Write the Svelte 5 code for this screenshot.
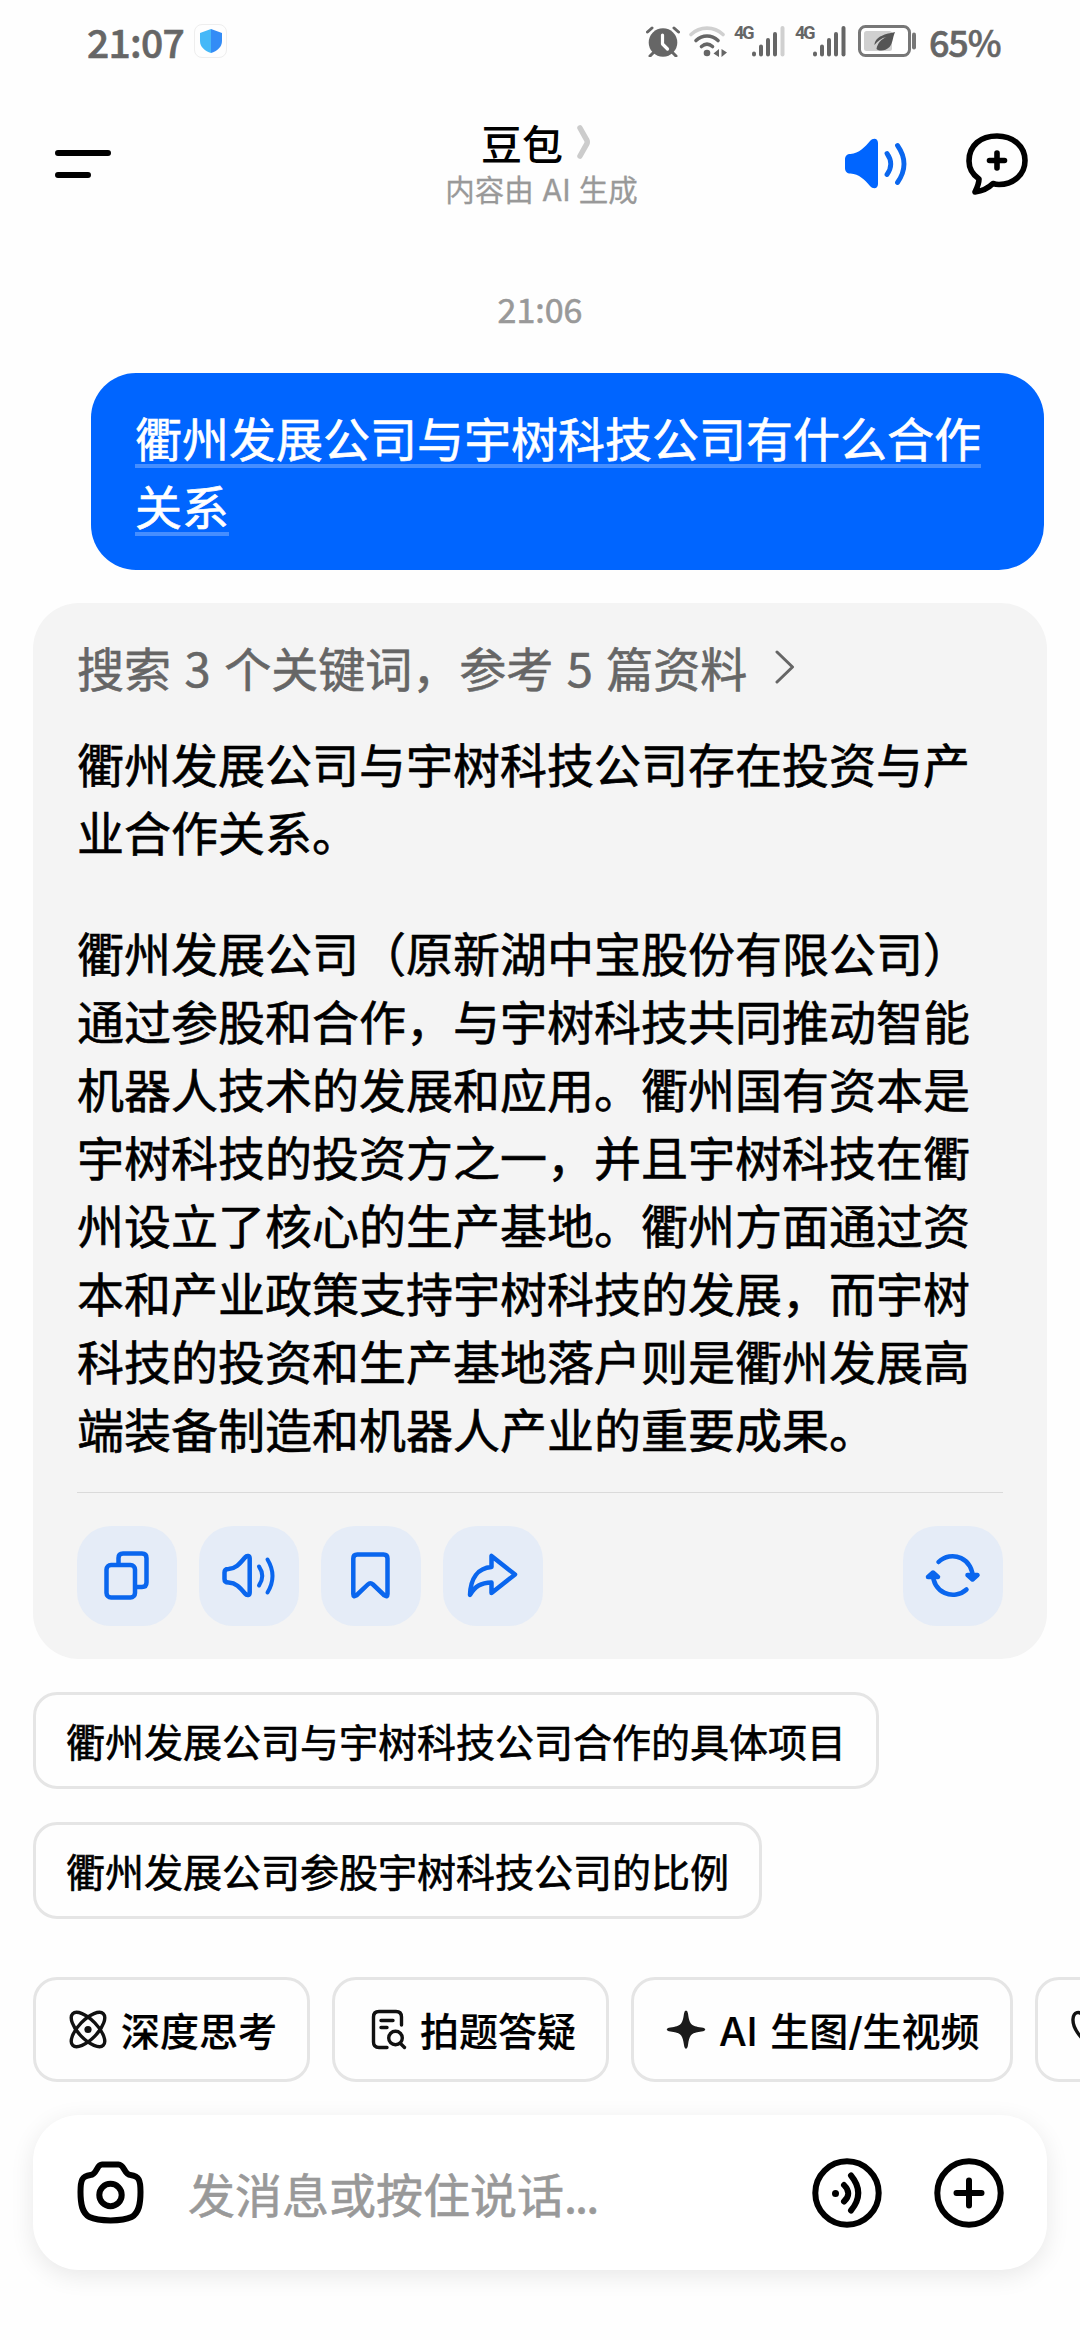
<script>
  const suggestions = [
    '衢州发展公司与宇树科技公司合作的具体项目',
    '衢州发展公司参股宇树科技公司的比例',
  ];
  const tools = [
    { icon: 'atom', label: '深度思考' },
    { icon: 'scan', label: '拍题答疑' },
    { icon: 'spark', label: 'AI 生图/生视频' },
    { icon: 'phone', label: '' },
  ];
</script>

{#snippet signal(weak)}
  <div class="signal">
    <span class="net">4G</span>
    <svg width="33" height="31" viewBox="0 0 33 31" stroke-width="4" stroke-linecap="round" stroke="#666">
      <path d="M2 27.500v1M9 20.500v8M16 14v14.500M23 8v20.500" />
      <path d="M30.500 2v26.500" stroke={weak ? '#d0d0d0' : '#666'} />
    </svg>
  </div>
{/snippet}

<div class="screen">
  <div class="status">
    <span class="clock">21:07</span>
    <span class="badge">
      <svg width="24" height="26" viewBox="0 0 24 26">
        <path d="M12 1 23 5v8c0 6-5 10-11 12z" fill="#338cf6" />
        <path d="M12 1 1 5v8c0 6 5 10 11 12z" fill="#45b8f8" />
      </svg>
    </span>
    <div class="indicators">
      <svg width="34" height="31" viewBox="0 0 34 31">
        <circle cx="17" cy="16.500" r="14.300" fill="#666" />
        <path d="M1.500 6 6 2M32.500 6 28 2M4 30l4-4M30 30l-4-4" stroke="#666" stroke-width="3" stroke-linecap="round" />
        <path d="M16.500 9v9l5 5" fill="none" stroke="#fff" stroke-width="3.200" stroke-linecap="round" stroke-linejoin="round" />
      </svg>
      <svg class="wifi" width="38" height="31" viewBox="0 0 38 31" fill="none" stroke="#666" stroke-width="3.600" stroke-linecap="round">
        <path d="M2 8.500C11 0 25 0 34 8.500" stroke="#d0d0d0" />
        <path d="M7 14.500c6.500-6 15.500-6 22 0M12.500 20.500c3.500-3 7.500-3 11 0" />
        <circle cx="18" cy="27" r="3.300" fill="#666" stroke="none" />
        <path d="M30 23v8l-5.500-3.500zM32.500 23v8l5.500-4.500z" fill="#666" stroke="none" />
      </svg>
      {@render signal(true)}
      {@render signal(false)}
      <svg class="battery" width="61" height="32" viewBox="0 0 61 32">
        <rect x="1.500" y="1.500" width="50" height="29" rx="6" fill="#fff" stroke="#777" stroke-width="3" />
        <rect x="6" y="6" width="28" height="20" rx="2.500" fill="#d0d0d0" />
        <path d="M56 9.500v13" stroke="#777" stroke-width="4" stroke-linecap="round" />
        <path d="M37 7c-9 2-20 4-20.500 13 3-4 7-7 12-8-5 2-9 6-10 12 3 2.500 9 2 13-2 3.500-4 3-9 5.500-15z" fill="#555" />
      </svg>
      <span class="percent">65%</span>
    </div>
  </div>

  <header>
    <svg width="56" height="28" viewBox="0 0 56 28" stroke="#000" stroke-width="6" stroke-linecap="round">
      <path d="M3 3h50M3 25h30" />
    </svg>
    <div class="heading">
      <div class="title">
        <span>豆包</span>
        <svg width="15" height="34" viewBox="0 0 15 34"><path d="M3 3l6.500 11.500q1.500 2.500 0 5L3 31" fill="none" stroke="#ccc" stroke-width="5.500" stroke-linecap="round" /></svg>
      </div>
      <div class="subtitle">内容由 AI 生成</div>
    </div>
    <div class="actions">
      <svg width="62" height="52" viewBox="0 0 62 52">
        <path d="M5.500 16C14 15.500 20 9 25 3c3-3.500 8-3 8 2v41c0 5-5 5.500-8 2-5-6-11-12-19.500-12.500C2 35.500 0 33.500 0 30v-8.500C0 18 2 16 5.500 16z" fill="#0065ff" />
        <path d="M42 15.500q7.500 10.500 0 21M52.500 7.500q13 18.500 0 37" fill="none" stroke="#0a66ee" stroke-width="4.800" stroke-linecap="round" />
      </svg>
      <svg width="62" height="62" viewBox="0 0 62 62" fill="none" stroke="#000" stroke-width="5.600" stroke-linecap="round" stroke-linejoin="round">
        <path d="M13 46C6.500 41.500 3 35 3 28 3 12 15 3 31 3s28 10 28 24.500C59 42 47 51.500 33 51.500q-3 0-6-1-7 7-18 8.500c2.500-5 4-8 4-13z" />
        <path d="M31 20v15M23.500 27.500h15" />
      </svg>
    </div>
  </header>

  <div class="stamp">21:06</div>
  <div class="question"><span>衢州发展公司与宇树科技公司有什么合作关系</span></div>

  <article>
    <div class="sources">
      <span>搜索 3 个关键词，参考 5 篇资料</span>
      <svg width="20" height="34" viewBox="0 0 20 34"><path d="M2 2l15.500 15L2 32" fill="none" stroke="#666" stroke-width="3" stroke-linecap="round" stroke-linejoin="round" /></svg>
    </div>
    <p>衢州发展公司与宇树科技公司存在投资与产业合作关系。</p>
    <p>衢州发展公司（原新湖中宝股份有限公司）通过参股和合作，与宇树科技共同推动智能机器人技术的发展和应用。衢州国有资本是宇树科技的投资方之一，并且宇树科技在衢州设立了核心的生产基地。衢州方面通过资本和产业政策支持宇树科技的发展，而宇树科技的投资和生产基地落户则是衢州发展高端装备制造和机器人产业的重要成果。</p>
    <div class="toolbar">
      <button aria-label="复制">
        <svg viewBox="0 0 100 100">
          <rect x="29.500" y="39" width="28.500" height="32.500" rx="4.500" />
          <path d="M41.500 37v-5q0-4.500 4.500-4.500h19q4.500 0 4.500 4.500v24.500q0 4.500-4.500 4.500h-5" />
        </svg>
      </button>
      <button aria-label="朗读">
        <svg viewBox="0 0 100 100">
          <path d="M29.500 43C37 42.500 40.500 38 46 31.500c2-2.500 4.700-2 4.700 1v34c0 3-2.700 3.500-4.700 1C40.500 61 37 57 29.500 56.500q-4 0-4-3.500v-6.500q0-3.500 4-3.500z" />
          <path d="M60 40.500q6.500 9.500 0 19M68.500 33.500q10 16.500 0 33" stroke-width="4" />
        </svg>
      </button>
      <button aria-label="收藏">
        <svg viewBox="0 0 100 100">
          <path d="M32.300 68V32.500q0-4 4-4H62.500q4 0 4 4V68q0 3.500-3 1.500L52 58.500q-2.600-2.500-5.200 0L35.300 69.500q-3 2-3-1.500z" />
        </svg>
      </button>
      <button aria-label="分享">
        <svg viewBox="0 0 100 100">
          <path d="M48.500 30v11C35 42 27.500 52 27 69c5-9 11-12 21.500-12.500V67L72 48.500z" />
        </svg>
      </button>
      <button class="retry" aria-label="重新生成">
        <svg viewBox="0 0 100 100">
          <path d="M35.500 36A20 20 0 0 1 69.500 52M63.500 63.500A20 20 0 0 1 30 48" />
          <path d="M64.500 49l5 4.500 5-4.500zM25 51l5-4.500 5 4.500z" fill="#0a66ee" />
        </svg>
      </button>
    </div>
  </article>

  <div class="suggestions">
    {#each suggestions as text}
      <button class="suggestion">{text}</button>
    {/each}
  </div>

  <div class="tools">
    {#each tools as tool}
      <button class="tool">
        <svg width="45" height="45" viewBox="0 0 45 45" fill="none" stroke="#111" stroke-width="3.400" stroke-linecap="round" stroke-linejoin="round">
          {#if tool.icon === 'atom'}
            <ellipse cx="22" cy="22.500" rx="22" ry="9.500" transform="rotate(46 22 22.500)" />
            <ellipse cx="22" cy="22.500" rx="22" ry="9.500" transform="rotate(-46 22 22.500)" />
            <circle cx="22" cy="22.500" r="3.600" fill="#111" stroke="none" />
          {:else if tool.icon === 'scan'}
            <path d="M22 40.500h-8q-5.500 0-5.500-5.500V10q0-5.500 5.500-5.500h17q5.500 0 5.500 5.500v8M16 13.500h12M16 20.500h6" />
            <circle cx="30.500" cy="31" r="6.800" />
            <path d="M35.500 36.500l4 4" />
          {:else if tool.icon === 'spark'}
            <path d="M22 3.500q1.500 0 2 3c1.500 11 3 12.500 13.500 14 5 .7 5 3.300 0 4-10.500 1.500-12 3-13.500 13.500-.7 5-3.300 5-4 0-1.500-10.500-3-12-13.500-13.500-5-.7-5-3.300 0-4 10.500-1.500 12-3 13.500-14q.5-3 2-3z" fill="#1a1a1a" stroke="none" />
          {:else}
            <path d="M14.500 9C12 3 5.500 5 5 12c-.5 7 3.500 13 8 18 6 6.500 14 10 19 9.500 6-.5 10-6 5-9.500l-5-3c-3-1.500-5 1-7 2.500-4-2-8-6-10-10 1.500-2 3-3.500 2-6z" />
          {/if}
        </svg>
        {#if tool.label}<span>{tool.label}</span>{/if}
      </button>
    {/each}
  </div>

  <div class="composer">
    <svg width="67" height="63" viewBox="0 0 67 63" fill="none" stroke="#000" stroke-width="6">
      <path d="M25 3.500h16.500c6 0 5.500 10 12 10.500C62 15 63.500 19 63.500 31c0 12-1.500 21-9 25-9 4.500-33 4.500-42 0C5 52 3.500 43 3.500 31 3.500 19 5 15 13.500 14c6.500-.5 6-10.500 11.500-10.500z" stroke-linejoin="round" />
      <circle cx="33.500" cy="34" r="11.200" />
    </svg>
    <span class="placeholder">发消息或按住说话<i>...</i></span>
    <svg width="70" height="70" viewBox="0 0 70 70" fill="none" stroke="#000" stroke-width="6" stroke-linecap="round">
      <circle cx="35" cy="35" r="31.700" />
      <circle cx="23.500" cy="35.500" r="3.500" fill="#000" stroke="none" />
      <path d="M32 27q8.500 8.500 0 16.500M39 17.500q14.500 17.500 0 35" />
    </svg>
    <svg class="plus" width="70" height="70" viewBox="0 0 70 70" fill="none" stroke="#000" stroke-width="6" stroke-linecap="round">
      <circle cx="35" cy="35" r="31.700" />
      <path d="M35 22.500v25M22.500 35h25" />
    </svg>
  </div>
</div>

<style>
  :global(body) {
    margin: 0;
    background: #fefefe;
  }
  .screen {
    width: 1080px;
    height: 2340px;
    overflow: hidden;
    background: #fefefe;
    color: #000;
    font-family: 'Noto Sans CJK SC', sans-serif;
    text-spacing-trim: space-all;
    -webkit-text-stroke: 0.6px currentColor;
    display: flex;
    flex-direction: column;
  }
  svg {
    display: block;
    flex: none;
  }
  button {
    font: inherit;
    color: inherit;
    margin: 0;
    padding: 0;
    border: 0;
    background: none;
  }
  .status {
    height: 82px;
    flex: none;
    display: flex;
    align-items: center;
    padding: 0 82px 0 87px;
    color: #666;
    box-sizing: border-box;
  }
  .clock {
    font-weight: 500;
    font-size: 39px;
    letter-spacing: -0.7px;
    width: 107px;
    line-height: 80px;
  }
  .badge {
    width: 31px;
    height: 32px;
    border: 1px solid #eee;
    border-radius: 8px;
    display: flex;
    align-items: center;
    justify-content: center;
  }
  .indicators {
    margin-left: auto;
    display: flex;
    align-items: center;
  }
  .wifi {
    margin: 0 7px 0 9px;
  }
  .signal {
    display: flex;
    align-items: flex-start;
    width: 51px;
    margin-right: 10px;
  }
  .net {
    width: 18px;
    font: 700 18px/20px 'Roboto', sans-serif;
    letter-spacing: -2px;
    margin-top: -3px;
    -webkit-text-stroke: 0;
  }
  .battery {
    margin-left: 2px;
  }
  .percent {
    font-size: 36px;
    font-weight: 500;
    width: 69px;
    margin-left: 10px;
    letter-spacing: -1.2px;
    line-height: 80px;
  }
  header {
    height: 164px;
    flex: none;
    display: grid;
    grid-template-columns: 1fr auto 1fr;
    align-items: center;
    padding: 0 52px 0 55px;
  }
  .heading {
    text-align: center;
  }
  .title {
    display: flex;
    justify-content: center;
    align-items: center;
    gap: 14px;
    padding-right: 10px;
    font-size: 41px;
    font-weight: 500;
    line-height: 50px;
    -webkit-text-stroke: 0;
  }
  .subtitle {
    font-family: 'Inter', 'Noto Sans CJK SC', sans-serif;
    font-size: 29.500px;
    line-height: 41px;
    padding-top: 3px;
    color: #999;
    -webkit-text-stroke: 0.3px currentColor;
  }
  .actions {
    display: flex;
    justify-content: flex-end;
    align-items: center;
    gap: 59px;
  }
  .stamp {
    height: 127px;
    flex: none;
    line-height: 125px;
    text-align: center;
    font-size: 34px;
    color: #999;
  }
  .question {
    align-self: flex-end;
    width: 953px;
    height: 197px;
    flex: none;
    box-sizing: border-box;
    margin-right: 36px;
    padding: 30px 44px 0;
    border-radius: 45px;
    background: #0065ff;
    color: #fff;
    font-size: 47px;
    line-height: 68px;
  }
  .question span {
    text-decoration: underline 4px rgba(255, 255, 255, 0.27);
    text-underline-offset: 7px;
    text-decoration-skip-ink: none;
  }
  article {
    margin: 33px 33px 0;
    padding: 30px 44px 33px;
    border-radius: 46px;
    background: #f4f4f4;
    font-size: 47px;
    line-height: 68px;
  }
  .sources {
    display: flex;
    align-items: center;
    gap: 28px;
    color: #666;
    word-spacing: 3px;
  }
  p {
    margin: 28px 0 0;
  }
  p + p {
    margin-top: 53px;
  }
  .toolbar {
    display: flex;
    gap: 22px;
    margin-top: 30px;
    padding-top: 33px;
    border-top: 1px solid #dadada;
  }
  .toolbar button {
    width: 100px;
    height: 100px;
    border-radius: 34px;
    background: #e5ecf7;
  }
  .toolbar svg {
    width: 100px;
    height: 100px;
    fill: none;
    stroke: #0a66ee;
    stroke-width: 4.500px;
    stroke-linecap: round;
    stroke-linejoin: round;
  }
  .toolbar .retry {
    margin-left: auto;
  }
  .suggestions {
    display: flex;
    flex-direction: column;
    align-items: flex-start;
    gap: 33px;
    padding: 33px 33px 58px;
  }
  .suggestion,
  .tool {
    border: 3px solid #e5e5e5;
    border-radius: 24px;
    padding: 0 30px;
    font-size: 39px;
    white-space: nowrap;
  }
  .suggestion {
    height: 97px;
    line-height: 89px;
  }
  .tools {
    display: flex;
    gap: 22px;
    padding-left: 33px;
  }
  .tool {
    height: 105px;
    flex: none;
    box-sizing: border-box;
    display: flex;
    align-items: center;
    gap: 10px;
    line-height: 95px;
    font-family: 'Inter', 'Noto Sans CJK SC', sans-serif;
    font-weight: 500;
    word-spacing: 2.500px;
    -webkit-text-stroke: 0.2px currentColor;
  }
  .tool span {
    padding-top: 3px;
  }
  .composer {
    display: flex;
    align-items: center;
    height: 155px;
    flex: none;
    box-sizing: border-box;
    margin: 33px 33px 0;
    padding: 0 43px 0 44px;
    border-radius: 46px;
    background: #fff;
    box-shadow: 0 6px 24px rgba(0, 0, 0, 0.09);
  }
  .placeholder {
    flex: 1;
    margin-left: 44px;
    font-size: 47px;
    line-height: 68px;
    color: #999;
  }
  .placeholder i {
    font-style: normal;
    letter-spacing: -2px;
  }
  .plus {
    margin-left: 52px;
  }
</style>
